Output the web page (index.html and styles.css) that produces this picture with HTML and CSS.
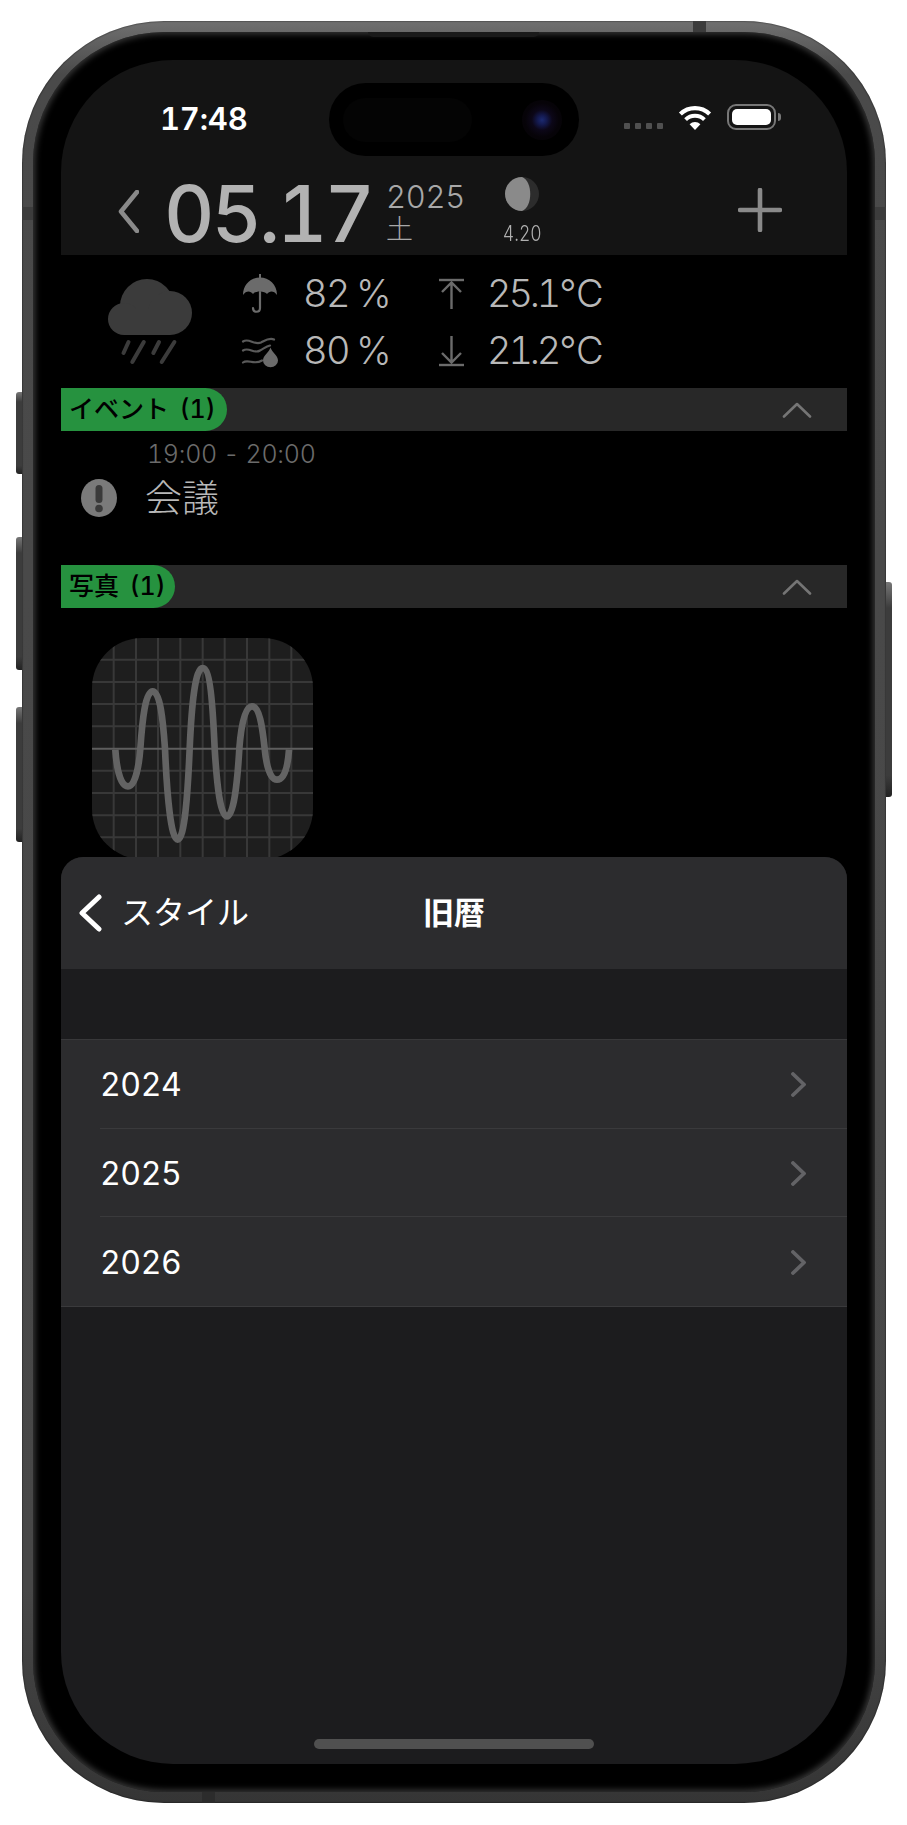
FILE: index.html
```html
<!DOCTYPE html>
<html lang="ja">
<head>
    <meta charset="UTF-8">
    <meta name="viewport" content="width=device-width, initial-scale=1.0">
    <title>旧暦</title>
    <link rel="stylesheet" href="styles.css">
</head>
<body>
    <div class="phone">
        <span class="side-btn btn-action"></span>
        <span class="side-btn btn-up"></span>
        <span class="side-btn btn-down"></span>
        <span class="side-btn btn-power"></span>
        <span class="band band-top"></span>
        <span class="band band-bottom"></span>
        <span class="band band-left"></span>
        <span class="band band-right"></span>

        <div class="bezel">
            <span class="speaker"></span>
            <div class="screen">

                <div class="island">
                    <span class="sensor"></span>
                    <span class="camera"></span>
                </div>

                <header class="top">
                    <div class="status-bar">
                        <span class="clock">17:48</span>
                        <div class="status-icons">
                            <div class="signal"><i></i><i></i><i></i><i></i></div>
                            <svg class="wifi" viewBox="0 0 34 25">
                                <path d="M17 25 L11.6 19.2 A8 8 0 0 1 22.4 19.2 Z" fill="#fff"/>
                                <path d="M7.6 14.6 A13.6 13.6 0 0 1 26.4 14.6" fill="none" stroke="#fff" stroke-width="4"/>
                                <path d="M2.4 9 A21 21 0 0 1 31.6 9" fill="none" stroke="#fff" stroke-width="4.2"/>
                            </svg>
                            <div class="battery"><span class="battery-fill"></span></div>
                            <span class="battery-cap"></span>
                        </div>
                    </div>
                    <div class="date-row">
                        <svg class="date-back" viewBox="0 0 21 43">
                            <path d="M19 2 L3 21.5 L19 41" fill="none" stroke="#8a8a8a" stroke-width="4.6" stroke-linecap="round" stroke-linejoin="round"/>
                        </svg>
                        <span class="date-big">05.17</span>
                        <div class="date-side">
                            <span class="year">2025</span>
                            <span class="weekday">土</span>
                        </div>
                        <div class="moon-box">
                            <svg class="moon" viewBox="0 0 34 34">
                                <circle cx="17" cy="17" r="17" fill="#2c2c2c"/>
                                <path d="M17 0 A17 17 0 0 0 17 34 C28 30 28 4 17 0 Z" fill="#8a8a8a"/>
                            </svg>
                            <span class="moon-age">4.20</span>
                        </div>
                        <svg class="date-add" viewBox="0 0 44 44">
                            <path d="M22 2 V42 M2 22 H42" stroke="#8a8a8a" stroke-width="4.6" stroke-linecap="round"/>
                        </svg>
                    </div>
                </header>

                <section class="weather">
                    <svg class="cloud" viewBox="0 0 84 86">
                        <circle cx="39" cy="27" r="27" fill="#3b3b3b"/>
                        <circle cx="62" cy="34" r="22" fill="#3b3b3b"/>
                        <circle cx="16" cy="40" r="16" fill="#3b3b3b"/>
                        <rect x="16" y="30" width="46" height="26" fill="#3b3b3b"/>
                        <path d="M20.5 63 L15.5 74 M35.8 63 L24.3 83 M51 63 L45.3 74 M66.4 63 L53.7 83" stroke="#3b3b3b" stroke-width="4" stroke-linecap="round"/>
                    </svg>
                    <div class="stats">
                        <svg class="stat-icon" viewBox="0 0 36 40">
                            <path d="M18 0 V4" stroke="#6b6b6b" stroke-width="2"/>
                            <path d="M1 21 C1 10 9 3.500 18 3.500 C27 3.500 35 10 35 21 C32 16.500 27.500 16.500 25 20 C23 16.500 13 16.500 11 20 C8.500 16.500 4 16.500 1 21 Z" fill="#6b6b6b"/>
                            <path d="M18 18 V34 C18 39 11 39 11 34" fill="none" stroke="#6b6b6b" stroke-width="2.2" stroke-linecap="round"/>
                        </svg>
                        <span class="stat-value">82<span class="unit">%</span></span>
                        <svg class="stat-arrow" viewBox="0 0 30 32">
                            <path d="M2 2 H27" stroke="#6b6b6b" stroke-width="2.400"/>
                            <path d="M14.500 31 V4 M5 14 L14.500 4.500 L24 14" fill="none" stroke="#6b6b6b" stroke-width="2.400"/>
                        </svg>
                        <span class="stat-value stat-temp">25.1<span class="deg">°C</span></span>

                        <svg class="stat-icon" viewBox="0 0 38 33">
                            <path d="M2 7 C8 3 13 11 20 8 C24 6 28 3 33 5 M2 16 C8 12 13 20 19 16 C23 14 25 12 29 11 M2 28 C7 24 13 31 21 26" fill="none" stroke="#5a5a5a" stroke-width="2.200" stroke-linecap="round"/>
                            <path d="M29.500 13 C31 18 37 21 37 26 A7.500 6.800 0 0 1 22 26 C22 21 28 18 29.500 13 Z" fill="#6b6b6b"/>
                        </svg>
                        <span class="stat-value">80<span class="unit">%</span></span>
                        <svg class="stat-arrow" viewBox="0 0 30 32">
                            <path d="M2 30 H27" stroke="#6b6b6b" stroke-width="2.400"/>
                            <path d="M14.500 1 V27 M5 18 L14.500 27.500 L24 18" fill="none" stroke="#6b6b6b" stroke-width="2.400"/>
                        </svg>
                        <span class="stat-value stat-temp">21.2<span class="deg">°C</span></span>
                    </div>
                </section>

                <div class="section-bar">
                    <span class="section-pill pill-events">イベント (1)</span>
                    <svg class="collapse" viewBox="0 0 30 17">
                        <path d="M2 15.500 L15 3 L28 15.500" fill="none" stroke="#757575" stroke-width="2.600" stroke-linecap="round" stroke-linejoin="round"/>
                    </svg>
                </div>
                <div class="event">
                    <svg class="event-icon" viewBox="0 0 36 38">
                        <ellipse cx="18" cy="19" rx="18" ry="19" fill="#7a7a7a"/>
                        <rect x="14.500" y="6" width="7" height="18" rx="3.500" fill="#3a3a3a"/>
                        <circle cx="18" cy="29.500" r="3.800" fill="#3a3a3a"/>
                    </svg>
                    <div class="event-text">
                        <span class="event-time">19:00 - 20:00</span>
                        <span class="event-title">会議</span>
                    </div>
                </div>

                <div class="section-bar">
                    <span class="section-pill pill-photos">写真 (1)</span>
                    <svg class="collapse" viewBox="0 0 30 17">
                        <path d="M2 15.500 L15 3 L28 15.500" fill="none" stroke="#757575" stroke-width="2.600" stroke-linecap="round" stroke-linejoin="round"/>
                    </svg>
                </div>
                <div class="photos">
                    <svg class="photo" viewBox="95 55 663 663">
                        <path d="M160 55 V718 M227 55 V718 M293 55 V718 M360 55 V718 M427 55 V718 M493 55 V718 M560 55 V718 M627 55 V718 M693 55 V718 M95 120 H758 M95 187 H758 M95 253 H758 M95 320 H758 M95 453 H758 M95 520 H758 M95 587 H758 M95 653 H758" stroke="#383838" stroke-width="6"/>
                        <path d="M95 387 H758" stroke="#5e5e5e" stroke-width="6"/>
                        <path d="M165 390 C170 465 185 500 203 500 C222 500 235 450 240 387 C246 300 255 215 277 215 C299 215 308 300 314 387 C320 530 332 660 352 660 C372 660 382 530 388 387 C394 250 405 145 427 145 C449 145 457 250 463 387 C470 500 480 590 500 590 C520 590 531 490 537 387 C542 320 553 260 575 260 C597 260 606 320 613 387 C618 440 630 480 650 480 C670 480 682 450 686 390" fill="none" stroke="#636363" stroke-width="20" stroke-linecap="butt"/>
                    </svg>
                </div>

                <div class="sheet">
                    <div class="sheet-nav">
                        <div class="sheet-back">
                            <svg class="sheet-chevron" viewBox="0 0 24 38">
                                <path d="M21 3 L4 19 L21 35" fill="none" stroke="#fff" stroke-width="5" stroke-linecap="round" stroke-linejoin="round"/>
                            </svg>
                            <span>スタイル</span>
                        </div>
                        <span class="sheet-title">旧暦</span>
                    </div>
                    <ul class="year-list">
                        <li class="year-row"><span>2024</span>
                            <svg class="row-arrow" viewBox="0 0 15 25"><path d="M2 2 L13 12.500 L2 23" fill="none" stroke="#636366" stroke-width="3.800" stroke-linecap="round" stroke-linejoin="round"/></svg>
                        </li>
                        <li class="year-row"><span>2025</span>
                            <svg class="row-arrow" viewBox="0 0 15 25"><path d="M2 2 L13 12.500 L2 23" fill="none" stroke="#636366" stroke-width="3.800" stroke-linecap="round" stroke-linejoin="round"/></svg>
                        </li>
                        <li class="year-row"><span>2026</span>
                            <svg class="row-arrow" viewBox="0 0 15 25"><path d="M2 2 L13 12.500 L2 23" fill="none" stroke="#636366" stroke-width="3.800" stroke-linecap="round" stroke-linejoin="round"/></svg>
                        </li>
                    </ul>
                    <span class="home-bar"></span>
                </div>

            </div>
        </div>
    </div>
</body>
</html>
```

FILE: styles.css
```css
* {
    box-sizing: border-box;
}

body {
    margin: 0;
    background: #fff;
    font-family: Inter, "Noto Sans CJK JP", sans-serif;
    font-feature-settings: "tnum";
}

/* device frame */
.phone {
    position: relative;
    width: 864px;
    height: 1782px;
    margin: 21px 0 0 22px;
    padding: 11px;
    border-radius: 142px;
    background: linear-gradient(#707070, #4a4a4a 3%, #474747 88%, #353535);
    box-shadow: inset 0 0 1px 1px rgba(0, 0, 0, 0.25);
}

.bezel {
    position: relative;
    height: 100%;
    padding: 28px;
    border-radius: 131px;
    background: #000;
    box-shadow: inset 0 0 6px 2px rgba(90, 90, 90, 0.65);
}

.speaker {
    position: absolute;
    top: 0;
    left: 335px;
    width: 171px;
    height: 5px;
    border-radius: 0 0 5px 5px;
    background: #1a1a1a;
}

.side-btn {
    position: absolute;
    left: -6px;
    width: 6px;
    border-radius: 3px 0 0 3px;
    background: linear-gradient(#777, #3c3c3c 12%, #3c3c3c 90%, #222);
}

.btn-action { top: 371px; height: 82px; }
.btn-up { top: 516px; height: 133px; }
.btn-down { top: 686px; height: 135px; }
.btn-power { left: auto; right: -6px; top: 561px; height: 215px; border-radius: 0 3px 3px 0; }

.band {
    position: absolute;
    background: #3c3c3c;
}

.band-top { top: 0; left: 671px; width: 13px; height: 11px; }
.band-bottom { bottom: 0; left: 180px; width: 13px; height: 11px; background: #2c2c2c; }
.band-left { left: 0; top: 186px; width: 11px; height: 13px; }
.band-right { right: 0; top: 186px; width: 11px; height: 13px; }

/* screen */
.screen {
    position: relative;
    height: 100%;
    overflow: hidden;
    border-radius: 112px;
    background: #000;
    color: #b4b4b4;
}

.island {
    position: absolute;
    top: 23px;
    left: 268px;
    width: 250px;
    height: 73px;
    border-radius: 37px;
    background: #000;
}

.sensor {
    position: absolute;
    top: 15px;
    left: 14px;
    width: 129px;
    height: 44px;
    border-radius: 22px;
    background: #040404;
}

.camera {
    position: absolute;
    top: 17px;
    left: 193px;
    width: 40px;
    height: 40px;
    border-radius: 50%;
    background: radial-gradient(circle, #1c2a70 0, #141a50 16%, #0c0718 36%, #060308 60%, #050306 100%);
}

.top {
    height: 195px;
    background: #141414;
}

.status-bar {
    display: flex;
    justify-content: space-between;
    height: 119px;
    padding: 44px 66px 0 99px;
}

.clock {
    font-size: 31px;
    font-weight: 600;
    line-height: 30px;
    color: #fff;
    letter-spacing: -0.2px;
}

.status-icons {
    display: flex;
    align-items: flex-start;
    height: 30px;
}

.signal {
    display: flex;
    gap: 5px;
    margin-top: 19px;
    margin-right: 15px;
}

.signal i {
    width: 6px;
    height: 6px;
    border-radius: 1px;
    background: #505050;
}

.wifi {
    width: 34px;
    height: 25px;
    margin-top: 1px;
    margin-right: 15px;
}

.battery {
    width: 49px;
    height: 26px;
    padding: 3px;
    border: 2px solid #777;
    border-radius: 9px;
}

.battery-fill {
    display: block;
    height: 100%;
    border-radius: 5px;
    background: #fff;
}

.battery-cap {
    width: 3px;
    height: 8px;
    margin: 9px 0 0 2px;
    border-radius: 0 3px 3px 0;
    background: #777;
}

.date-row {
    position: relative;
    display: flex;
    height: 76px;
}

.date-back {
    width: 21px;
    height: 43px;
    margin: 11px 0 0 57px;
}

.date-big {
    width: 222px;
    margin-left: 25px;
    font-size: 78px;
    font-weight: 500;
    line-height: 70px;
    letter-spacing: -3px;
    color: #b2b2b2;
}

.date-side {
    display: flex;
    flex-direction: column;
    width: 115px;
}

.year {
    font-size: 31px;
    font-weight: 300;
    line-height: 36px;
    letter-spacing: -0.3px;
    color: #a8a8a8;
}

.weekday {
    font-size: 27px;
    font-weight: 300;
    line-height: 30px;
    color: #a8a8a8;
}

.moon-box {
    display: flex;
    flex-direction: column;
    align-items: center;
    width: 42px;
}

.moon {
    width: 34px;
    height: 34px;
    margin-top: -2px;
    filter: blur(0.6px);
}

.moon-age {
    margin-top: 9px;
    font-size: 22px;
    font-weight: 300;
    line-height: 26px;
    transform: scaleX(0.8);
    color: #b0b0b0;
}

.date-add {
    width: 44px;
    height: 44px;
    margin: 9px 65px 0 auto;
}

/* weather */
.weather {
    display: flex;
    height: 133px;
    padding: 24px 0 0 47px;
}

.cloud {
    width: 84px;
    height: 86px;
}

.stats {
    display: grid;
    grid-template-columns: 62px 134px 50px auto;
    grid-auto-rows: 57px;
    align-items: center;
    margin: -14px 0 0 49px;
}

.stat-icon {
    display: block;
    width: 38px;
    height: 40px;
}

.stat-arrow {
    display: block;
    width: 30px;
    height: 32px;
}

.stat-value {
    font-size: 38px;
    font-weight: 300;
    line-height: 57px;
    letter-spacing: -1.6px;
    color: #b8b8b8;
}

.stat-temp {
    letter-spacing: -3.2px;
}

.deg {
    letter-spacing: 0;
    margin-left: 1px;
}

.unit {
    margin-left: 7px;
}

/* section headers */
.section-bar {
    display: flex;
    justify-content: space-between;
    align-items: center;
    height: 43px;
    background: #282828;
}

.section-pill {
    height: 100%;
    padding-left: 8px;
    border-radius: 0 22px 22px 0;
    background: #26923f;
    font-size: 25px;
    font-weight: 500;
    line-height: 43px;
    word-spacing: 4px;
    color: #000;
    white-space: nowrap;
}

.pill-events { width: 166px; }
.pill-photos { width: 114px; }

.collapse {
    width: 30px;
    height: 17px;
    margin-right: 35px;
}

/* event */
.event {
    display: flex;
    height: 134px;
    padding: 9px 0 0 20px;
}

.event-icon {
    width: 36px;
    height: 38px;
    margin-top: 39px;
}

.event-text {
    display: flex;
    flex-direction: column;
    margin-left: 28px;
}

.event-time {
    margin-left: 2px;
    font-size: 25px;
    font-weight: 300;
    line-height: 28px;
    letter-spacing: -0.3px;
    color: #6b6b6b;
}

.event-title {
    margin-top: 9px;
    font-size: 37px;
    font-weight: 300;
    line-height: 44px;
    color: #b8b8b8;
}

/* photos */
.photos {
    padding: 30px 0 0 31px;
}

.photo {
    display: block;
    width: 221px;
    height: 221px;
    border-radius: 50px;
    background: #1e1e1e;
}

/* sheet over the page */
.sheet {
    position: absolute;
    top: 797px;
    left: 0;
    right: 0;
    bottom: 0;
    border-radius: 22px 22px 0 0;
    background: #1c1c1e;
}

.sheet-nav {
    position: relative;
    display: flex;
    justify-content: center;
    align-items: center;
    height: 112px;
    border-radius: 22px 22px 0 0;
    background: #2c2c2e;
    color: #fff;
}

.sheet-back {
    position: absolute;
    left: 17px;
    top: 36px;
    display: flex;
    align-items: center;
    gap: 19px;
    font-size: 32px;
    line-height: 40px;
}

.sheet-chevron {
    width: 24px;
    height: 38px;
}

.sheet-title {
    font-size: 31px;
    font-weight: 700;
    line-height: 40px;
}

.year-list {
    margin: 70px 0 0;
    padding: 0;
    list-style: none;
    background: #2c2c2e;
    border-top: 1px solid #38383a;
    border-bottom: 1px solid #3a3a3c;
}

.year-row {
    position: relative;
    display: flex;
    justify-content: space-between;
    align-items: center;
    height: 88.7px;
    margin-left: 39px;
    padding: 2px 41px 0 0;
    font-size: 32px;
    letter-spacing: -0.4px;
    color: #fff;
    border-bottom: 1px solid #3a3a3c;
}

.year-row:last-child {
    border-bottom: none;
}

.row-arrow {
    width: 15px;
    height: 25px;
}

.home-bar {
    position: absolute;
    left: 253px;
    bottom: 15px;
    width: 280px;
    height: 10px;
    border-radius: 5px;
    background: #505050;
}
```
